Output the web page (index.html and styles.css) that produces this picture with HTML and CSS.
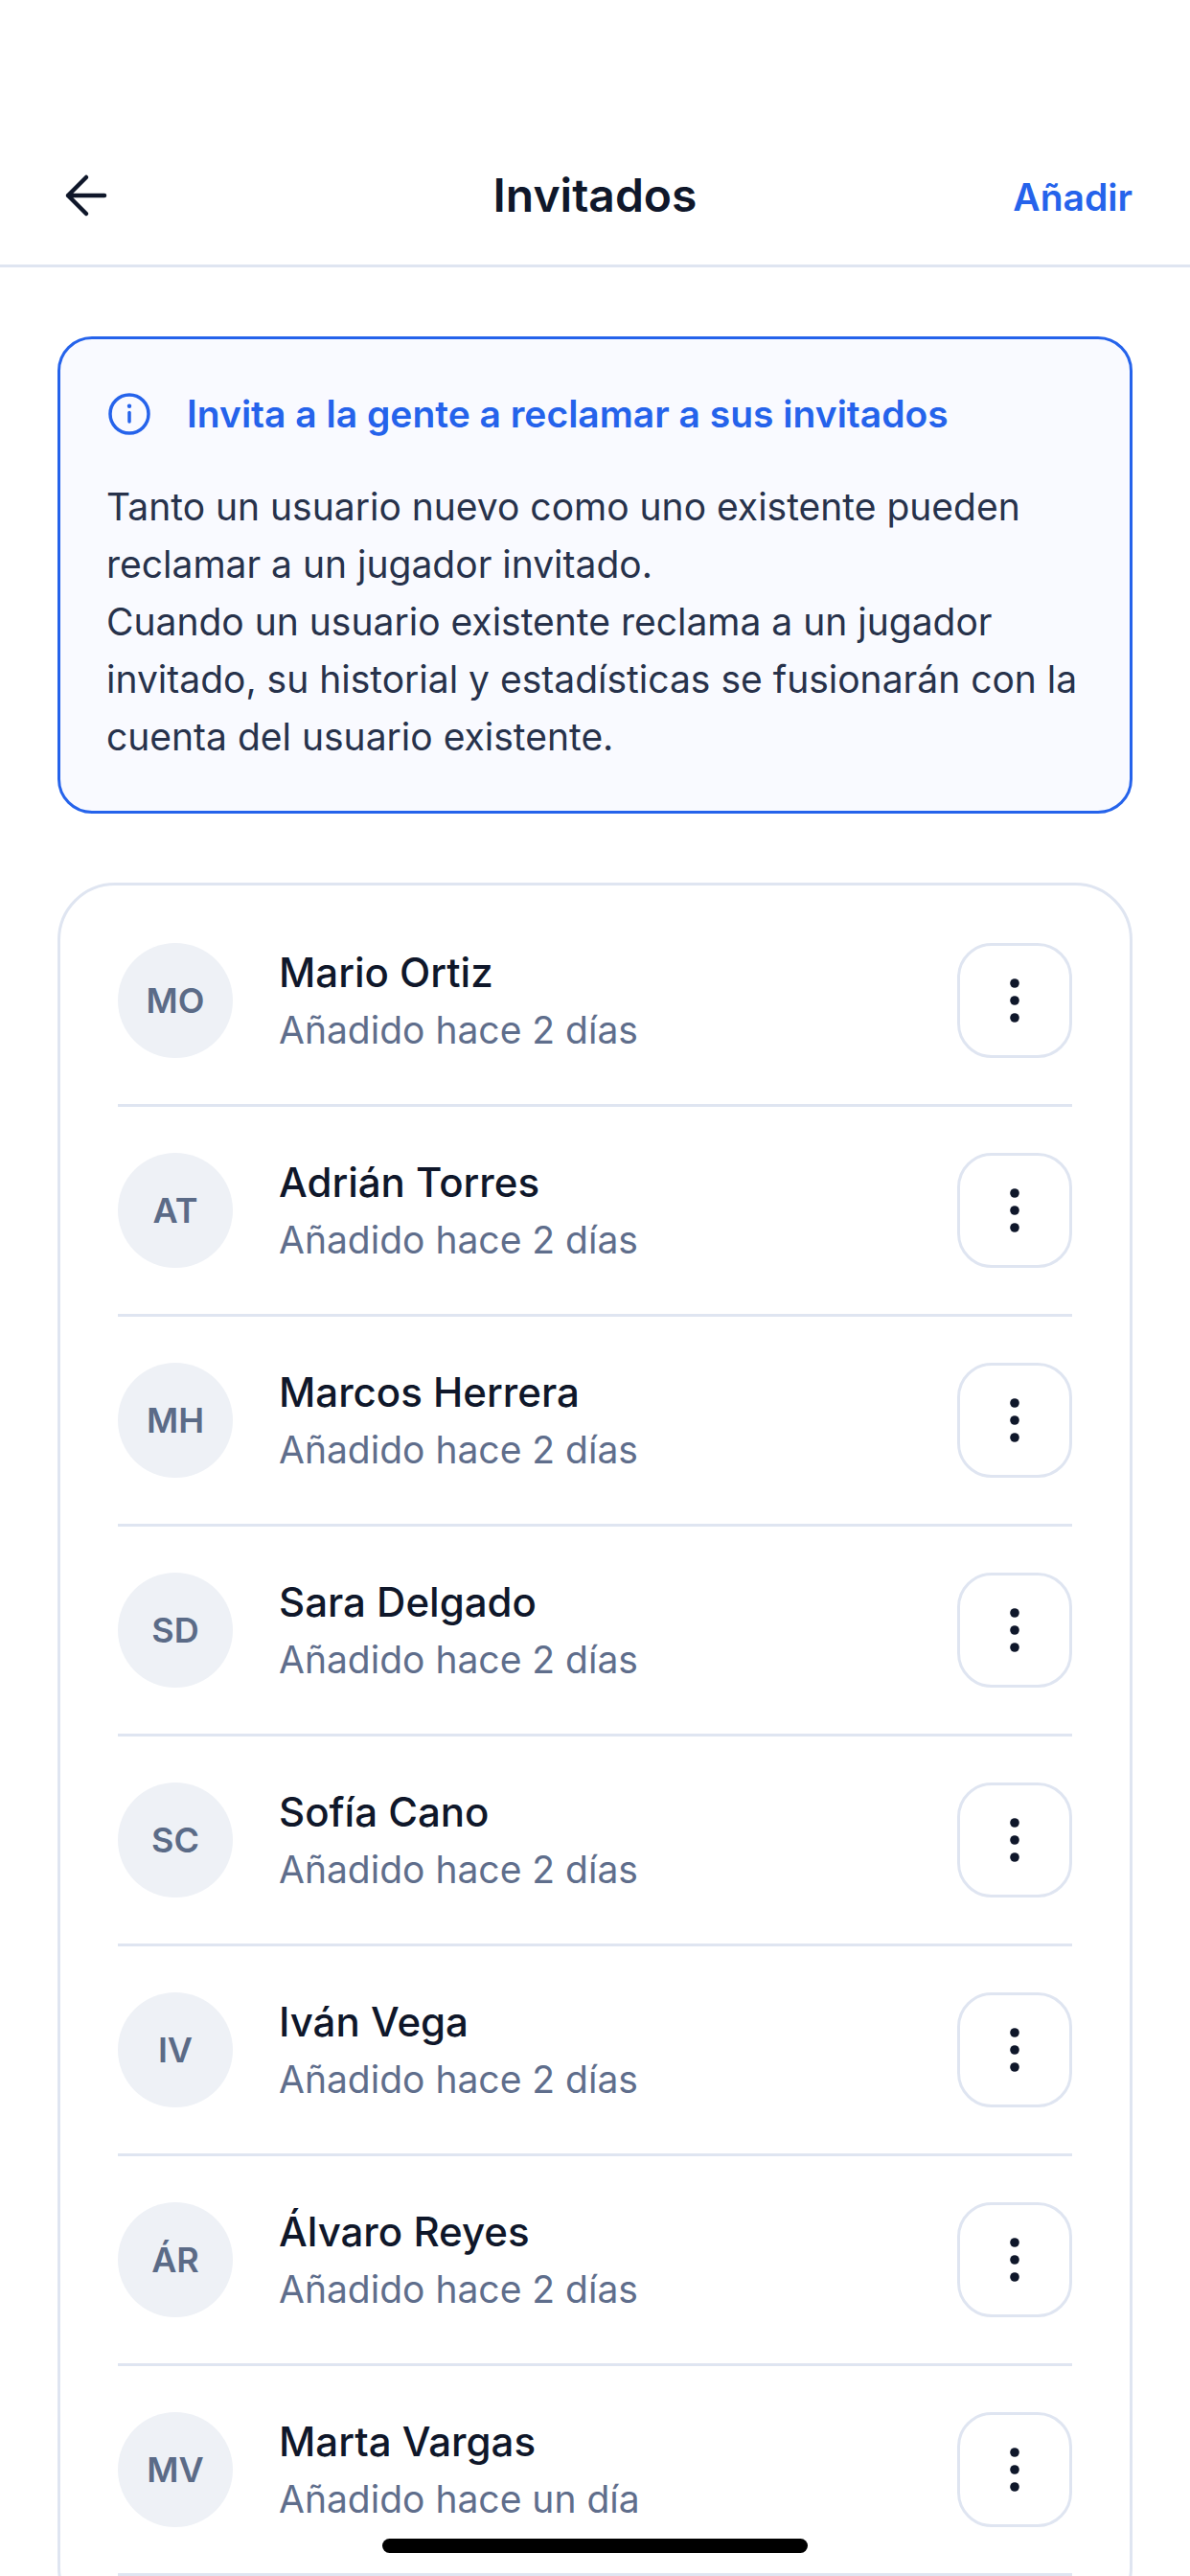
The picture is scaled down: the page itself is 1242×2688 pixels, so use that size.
FILE: index.html
```html
<!DOCTYPE html>
<html lang="es">
<head>
<meta charset="utf-8">
<title>Invitados</title>
<link rel="stylesheet" href="styles.css">
</head>
<body>
<div class="screen">
  <header class="topbar">
    <svg class="back" viewBox="0 0 60 60" width="60" height="60"><path d="M49 30H11M30 11 11 30l19 19" /></svg>
    <h1 class="title">Invitados</h1>
    <span class="add">Añadir</span>
  </header>
  <main class="content">
    <section class="notice">
      <div class="notice-head">
        <svg class="info" viewBox="0 0 44 44" width="44" height="44"><circle cx="22" cy="22" r="20" /><path d="M22 20.5v9.5" /><circle class="info-dot" cx="22" cy="13.7" r="2.2" /></svg>
        <h2 class="notice-title">Invita a la gente a reclamar a sus invitados</h2>
      </div>
      <p class="notice-text">Tanto un usuario nuevo como uno existente pueden reclamar a un jugador invitado.<br>Cuando un usuario existente reclama a un jugador invitado, su historial y estadísticas se fusionarán con la cuenta del usuario existente.</p>
    </section>
    <section class="list">
      <div class="row"><div class="avatar">MO</div><div class="who"><div class="name">Mario Ortiz</div><div class="when">Añadido hace 2 días</div></div><button class="more"><svg viewBox="0 0 10 46" width="10" height="46"><circle cx="5" cy="5" r="4.8"/><circle cx="5" cy="23" r="4.8"/><circle cx="5" cy="41" r="4.8"/></svg></button></div>
      <div class="row"><div class="avatar">AT</div><div class="who"><div class="name">Adrián Torres</div><div class="when">Añadido hace 2 días</div></div><button class="more"><svg viewBox="0 0 10 46" width="10" height="46"><circle cx="5" cy="5" r="4.8"/><circle cx="5" cy="23" r="4.8"/><circle cx="5" cy="41" r="4.8"/></svg></button></div>
      <div class="row"><div class="avatar">MH</div><div class="who"><div class="name">Marcos Herrera</div><div class="when">Añadido hace 2 días</div></div><button class="more"><svg viewBox="0 0 10 46" width="10" height="46"><circle cx="5" cy="5" r="4.8"/><circle cx="5" cy="23" r="4.8"/><circle cx="5" cy="41" r="4.8"/></svg></button></div>
      <div class="row"><div class="avatar">SD</div><div class="who"><div class="name">Sara Delgado</div><div class="when">Añadido hace 2 días</div></div><button class="more"><svg viewBox="0 0 10 46" width="10" height="46"><circle cx="5" cy="5" r="4.8"/><circle cx="5" cy="23" r="4.8"/><circle cx="5" cy="41" r="4.8"/></svg></button></div>
      <div class="row"><div class="avatar">SC</div><div class="who"><div class="name">Sofía Cano</div><div class="when">Añadido hace 2 días</div></div><button class="more"><svg viewBox="0 0 10 46" width="10" height="46"><circle cx="5" cy="5" r="4.8"/><circle cx="5" cy="23" r="4.8"/><circle cx="5" cy="41" r="4.8"/></svg></button></div>
      <div class="row"><div class="avatar">IV</div><div class="who"><div class="name">Iván Vega</div><div class="when">Añadido hace 2 días</div></div><button class="more"><svg viewBox="0 0 10 46" width="10" height="46"><circle cx="5" cy="5" r="4.8"/><circle cx="5" cy="23" r="4.8"/><circle cx="5" cy="41" r="4.8"/></svg></button></div>
      <div class="row"><div class="avatar">ÁR</div><div class="who"><div class="name">Álvaro Reyes</div><div class="when">Añadido hace 2 días</div></div><button class="more"><svg viewBox="0 0 10 46" width="10" height="46"><circle cx="5" cy="5" r="4.8"/><circle cx="5" cy="23" r="4.8"/><circle cx="5" cy="41" r="4.8"/></svg></button></div>
      <div class="row"><div class="avatar">MV</div><div class="who"><div class="name">Marta Vargas</div><div class="when">Añadido hace un día</div></div><button class="more"><svg viewBox="0 0 10 46" width="10" height="46"><circle cx="5" cy="5" r="4.8"/><circle cx="5" cy="23" r="4.8"/><circle cx="5" cy="41" r="4.8"/></svg></button></div>
    </section>
  </main>
  <div class="home-indicator"></div>
</div>
</body>
</html>
```
FILE: styles.css
```css
* { box-sizing: border-box; }
html, body { margin: 0; padding: 0; background: #fff; }
.screen {
  position: relative;
  width: 1242px;
  height: 2688px;
  overflow: hidden;
  font-family: Inter, "Liberation Sans", sans-serif;
  background: #fff;
}
.topbar {
  height: 279px;
  padding: 132px 60px 0;
  display: grid;
  grid-template-columns: 1fr auto 1fr;
  align-items: center;
  border-bottom: 3px solid #dfe5f1;
}
.back { fill: none; stroke: #0f172a; stroke-width: 4.5; stroke-linecap: round; stroke-linejoin: round; }
.title {
  margin: 0;
  font-size: 48px;
  font-weight: 600;
  color: #0f172a;
  line-height: 144px;
}
.add { justify-self: end; margin-top: 2px; font-size: 39px; font-weight: 600; color: #2563eb; }
.content { padding: 72px 60px 0; }
.notice {
  height: 498px;
  padding: 48px 48px 0;
  border: 3px solid #2563eb;
  border-radius: 36px;
  background: #f9faff;
}
.notice-head { display: flex; align-items: center; gap: 38px; }
.info { flex: none; margin-left: 2px; fill: none; stroke: #2563eb; stroke-width: 3.5; stroke-linecap: round; }
.info-dot { fill: #2563eb; stroke: none; }
.notice-title { margin: 0; font-size: 39px; font-weight: 600; color: #2563eb; line-height: 60px; }
.notice-text { margin: 37px 0 0; font-size: 39px; line-height: 60px; color: #27324b; }
.list {
  margin-top: 72px;
  padding: 60px 60px 0;
  border: 3px solid #dfe5f1;
  border-radius: 60px;
}
.row {
  display: flex;
  align-items: center;
  gap: 48px;
  padding-bottom: 48px;
  margin-bottom: 48px;
  border-bottom: 3px solid #dfe5f1;
}
.avatar {
  flex: none;
  width: 120px;
  height: 120px;
  border-radius: 50%;
  background: #eef1f6;
  color: #5b6b87;
  font-size: 36px;
  font-weight: 600;
  display: flex;
  align-items: center;
  justify-content: center;
}
.who { flex: 1; height: 120px; padding-top: 1px; }
.name { font-size: 42px; font-weight: 500; line-height: 60px; color: #0f172a; }
.when { font-size: 39px; line-height: 60px; color: #5f6e8c; }
.more {
  flex: none;
  width: 120px;
  height: 120px;
  padding: 0;
  background: #fff;
  border: 3px solid #dfe5f1;
  border-radius: 36px;
  display: flex;
  align-items: center;
  justify-content: center;
}
.more svg { fill: #0f172a; }
.home-indicator {
  position: absolute;
  left: 399px;
  top: 2649px;
  width: 444px;
  height: 15px;
  border-radius: 8px;
  background: #000;
}
```
